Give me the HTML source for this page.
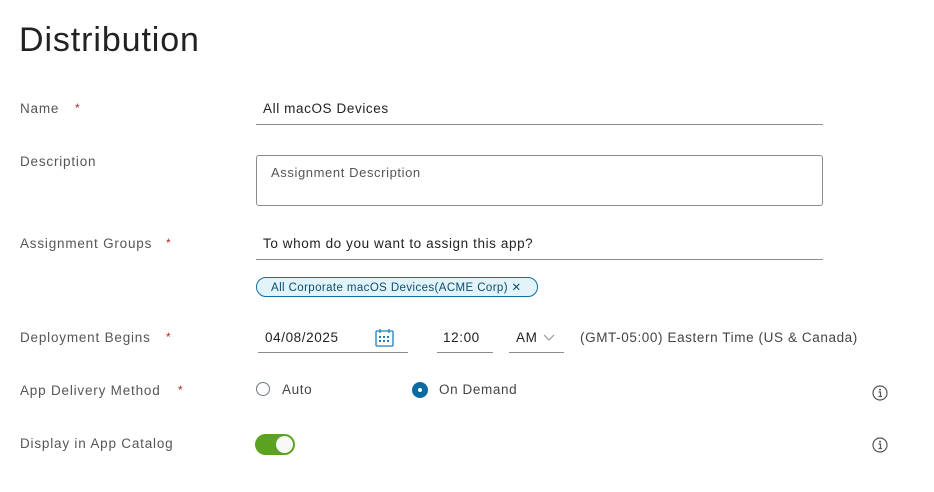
<!DOCTYPE html>
<html><head><style>
body{margin:0;width:934px;height:492px;background:#fff;font-family:"Liberation Sans",sans-serif;color:#333;position:relative;overflow:hidden}
.a{position:absolute;white-space:nowrap}
.lbl{font-size:13.5px;color:#565656;left:20px;letter-spacing:0.8px}
.req{color:#b3282d;font-size:12px;position:absolute}
.v{font-size:13.5px;color:#222;letter-spacing:0.6px}
.line{position:absolute;height:1px;background:#8c8c8c}
</style></head><body>
<div class="a" style="left:19px;top:21px;font-size:34px;color:#222;letter-spacing:0.9px">Distribution</div>

<div class="a lbl" style="top:101px">Name</div><span class="req" style="left:75px;top:101px">*</span>
<div class="a v" style="left:263px;top:101px">All macOS Devices</div>
<div class="line" style="left:256px;top:124px;width:567px"></div>

<div class="a lbl" style="top:154px">Description</div>
<div class="a" style="left:256px;top:155px;width:565px;height:49px;border:1px solid #8c8c8c;border-radius:3px"></div>
<div class="a v" style="left:271px;top:165px;color:#555;font-size:13px">Assignment Description</div>

<div class="a lbl" style="top:236px">Assignment Groups</div><span class="req" style="left:166px;top:236px">*</span>
<div class="a v" style="left:263px;top:236px">To whom do you want to assign this app?</div>
<div class="line" style="left:256px;top:259px;width:567px"></div>
<div class="a" style="left:256px;top:277px;width:280px;height:18px;border:1px solid #0f6fa0;border-radius:10px;background:#e3f3fa"></div>
<div class="a" style="left:271px;top:280px;font-size:11.5px;color:#0b4d70;letter-spacing:0.4px">All Corporate macOS Devices(ACME Corp) ✕</div>

<div class="a lbl" style="top:330px">Deployment Begins</div><span class="req" style="left:166px;top:330px">*</span>
<div class="a v" style="left:265px;top:330px">04/08/2025</div>
<svg class="a" style="left:375px;top:328px" width="20" height="19" viewBox="0 0 20 19"><rect x="1" y="3" width="17" height="15" rx="1" fill="none" stroke="#1a7fc0" stroke-width="1.3"/><line x1="5" y1="1" x2="5" y2="5" stroke="#1a7fc0" stroke-width="1.3"/><line x1="14" y1="1" x2="14" y2="5" stroke="#1a7fc0" stroke-width="1.3"/><g fill="#1a7fc0"><rect x="4" y="8" width="2" height="2"/><rect x="8" y="8" width="2" height="2"/><rect x="12" y="8" width="2" height="2"/><rect x="4" y="12" width="2" height="2"/><rect x="8" y="12" width="2" height="2"/><rect x="12" y="12" width="2" height="2"/></g></svg>
<div class="line" style="left:258px;top:352px;width:150px"></div>
<div class="a v" style="left:443px;top:330px">12:00</div>
<div class="line" style="left:437px;top:352px;width:56px"></div>
<div class="a v" style="left:516px;top:330px">AM</div>
<svg class="a" style="left:543px;top:334px" width="12" height="8"><polyline points="1,1 6,6 11,1" fill="none" stroke="#999" stroke-width="1.2"/></svg>
<div class="line" style="left:509px;top:352px;width:55px"></div>
<div class="a v" style="left:580px;top:330px;color:#444">(GMT-05:00) Eastern Time (US &amp; Canada)</div>

<div class="a lbl" style="top:383px">App Delivery Method</div><span class="req" style="left:178px;top:383px">*</span>
<div class="a" style="left:256px;top:382px;width:14px;height:14px;border:1px solid #6b7a86;border-radius:50%;box-sizing:border-box"></div>
<div class="a v" style="left:282px;top:382px;color:#444">Auto</div>
<div class="a" style="left:412px;top:382px;width:16px;height:16px;background:#0a6aa1;border-radius:50%"></div>
<div class="a" style="left:418px;top:388px;width:4px;height:4px;background:#fff;border-radius:50%"></div>
<div class="a v" style="left:439px;top:382px;color:#444">On Demand</div>
<svg class="a" style="left:872px;top:385px" width="16" height="16"><circle cx="8" cy="8" r="7" fill="none" stroke="#555" stroke-width="1.2"/><circle cx="8" cy="4.6" r="1" fill="#555"/><path d="M6.5 7h2v4.5M6.5 11.5h3.5" stroke="#555" stroke-width="1.2" fill="none"/></svg>

<div class="a lbl" style="top:436px">Display in App Catalog</div>
<div class="a" style="left:255px;top:434px;width:40px;height:21px;background:#5aa220;border-radius:11px"></div>
<div class="a" style="left:276px;top:436px;width:17px;height:17px;background:#f8f8f8;border-radius:50%"></div>
<svg class="a" style="left:872px;top:437px" width="16" height="16"><circle cx="8" cy="8" r="7" fill="none" stroke="#555" stroke-width="1.2"/><circle cx="8" cy="4.6" r="1" fill="#555"/><path d="M6.5 7h2v4.5M6.5 11.5h3.5" stroke="#555" stroke-width="1.2" fill="none"/></svg>
</body></html>
